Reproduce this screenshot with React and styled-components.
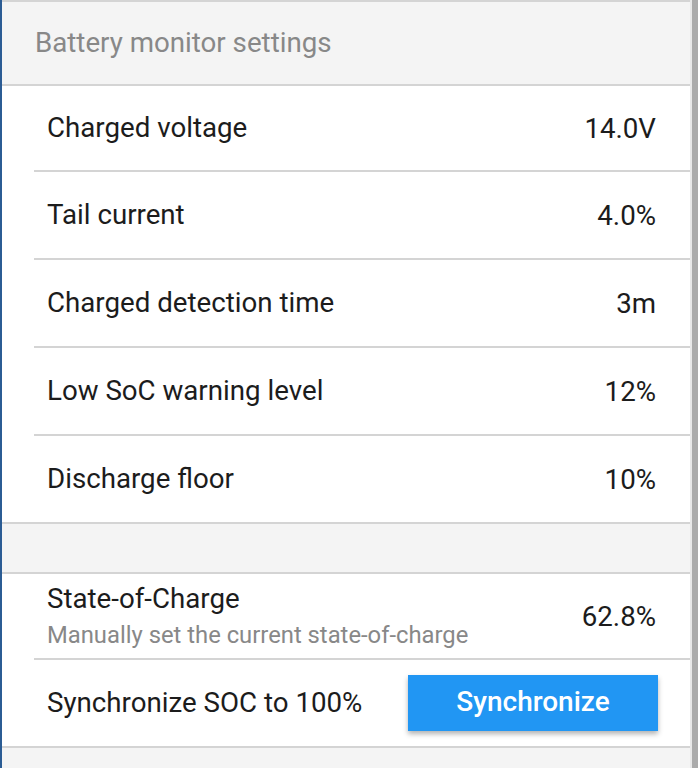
import styled, { createGlobalStyle } from 'styled-components';

const GlobalStyle = createGlobalStyle`
    html, body {
        margin: 0;
        padding: 0;
        background: #f4f4f4;
    }
    body {
        font-family: Roboto, 'Liberation Sans', sans-serif;
    }
`;

const Frame = styled.div`
    display: flex;
    height: 100vh;
    overflow: hidden;
`;

const LeftEdge = styled.div`
    width: 2px;
    background: #2b5c94;
`;

const Scrollbar = styled.div`
    width: 6px;
    border-left: 2px solid #e8e8e8;
    background: #ababab;
`;

const Panel = styled.div`
    flex: 1;
    background: #f4f4f4;
    border-top: 2px solid #d4d4d4;
`;

const Header = styled.div`
    height: 80px;
    padding-bottom: 2px;
    display: flex;
    align-items: center;
    padding-left: 33px;
    font-size: 27.7px;
    color: #888888;
    border-bottom: 2px solid #d4d4d4;
`;

const Group = styled.div`
    background: #ffffff;
    border-top: ${({ spaced }) => (spaced ? '2px solid #d4d4d4' : 'none')};
    border-bottom: 2px solid #d4d4d4;
    margin-top: ${({ spaced }) => (spaced ? '48px' : '0')};
`;

const Row = styled.div`
    display: flex;
    align-items: center;
    justify-content: space-between;
    height: ${({ short }) => (short ? '84px' : '86px')};
    margin-left: 32px;
    padding-left: 13px;
    padding-right: 34px;
    & + & {
        border-top: 2px solid #d4d4d4;
    }
`;

const Labels = styled.div`
    display: flex;
    flex-direction: column;
    gap: 6px;
`;

const Label = styled.div`
    font-size: 27.7px;
    line-height: 32px;
    color: #1c1c1c;
`;

const Sub = styled.div`
    font-size: 23.8px;
    line-height: 28px;
    color: #888888;
`;

const Value = styled.div`
    font-size: 27.7px;
    color: #1c1c1c;
`;

const Button = styled.button`
    width: 250px;
    height: 56px;
    margin-right: -2px;
    padding: 0 0 3px;
    border: none;
    background: #2196f3;
    color: #ffffff;
    font-family: Roboto, 'Liberation Sans', sans-serif;
    font-size: 28px;
    font-weight: 500;
    box-shadow: 0 3px 5px rgba(0, 0, 0, 0.3);
    cursor: pointer;
`;

const settings = [
    { label: 'Charged voltage', value: '14.0V' },
    { label: 'Tail current', value: '4.0%' },
    { label: 'Charged detection time', value: '3m' },
    { label: 'Low SoC warning level', value: '12%' },
    { label: 'Discharge floor', value: '10%' },
];

export default function App() {
    return (
        <>
            <GlobalStyle />
            <Frame>
                <LeftEdge />
                <Panel>
                    <Header>Battery monitor settings</Header>
                    <Group>
                        {settings.map((s, i) => (
                            <Row key={s.label} short={i === 0}>
                                <Label>{s.label}</Label>
                                <Value>{s.value}</Value>
                            </Row>
                        ))}
                    </Group>
                    <Group spaced>
                        <Row short>
                            <Labels>
                                <Label>State-of-Charge</Label>
                                <Sub>Manually set the current state-of-charge</Sub>
                            </Labels>
                            <Value>62.8%</Value>
                        </Row>
                        <Row>
                            <Label>Synchronize SOC to 100%</Label>
                            <Button>Synchronize</Button>
                        </Row>
                    </Group>
                </Panel>
                <Scrollbar />
            </Frame>
        </>
    );
}
